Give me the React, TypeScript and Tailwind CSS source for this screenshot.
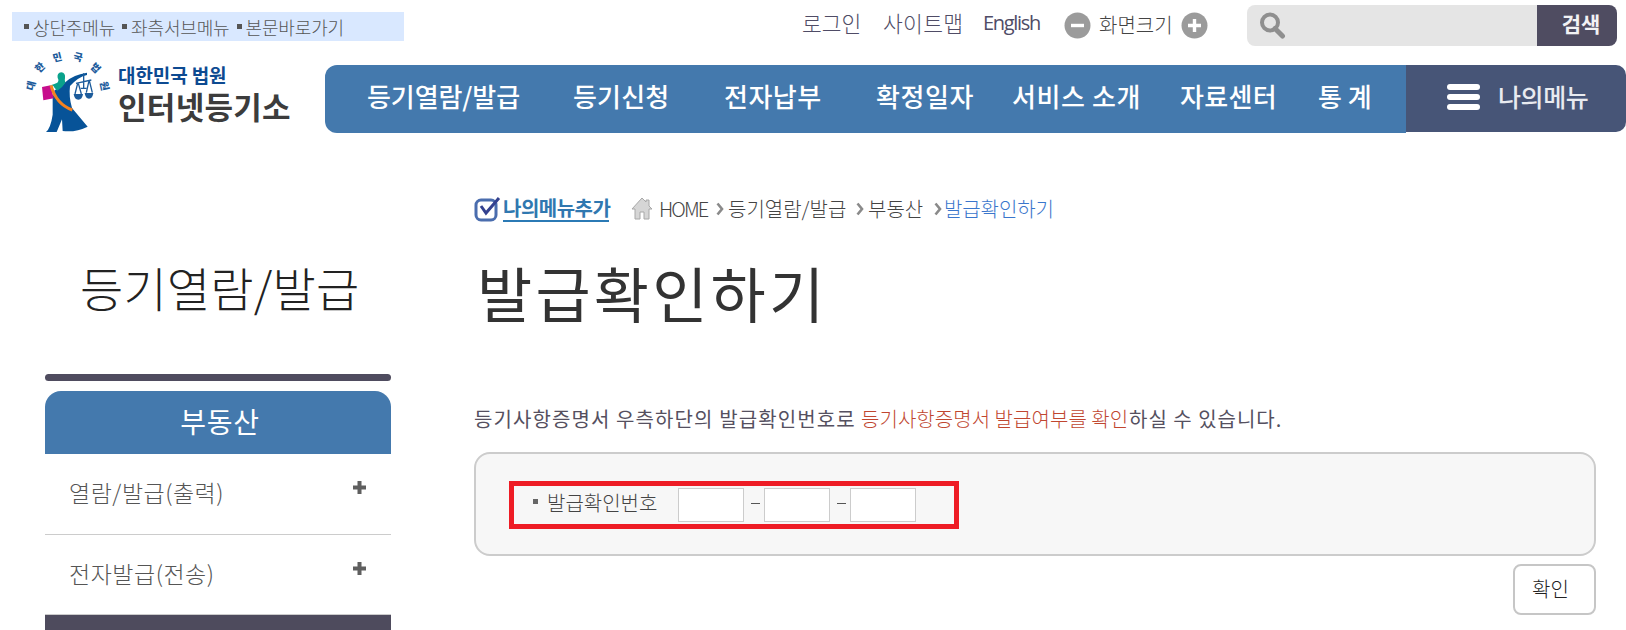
import React from "react";

const navItems = [
  { label: "등기열람/발급", className: "w-[206px] tracking-[-0.1px]" },
  { label: "등기신청", className: "w-[151px] tracking-[0.2px]" },
  { label: "전자납부", className: "w-[152px] tracking-[0.5px]" },
  { label: "확정일자", className: "w-[136px] tracking-[0.6px]" },
  { label: "서비스 소개", className: "w-[168px] tracking-[0.6px]" },
  { label: "자료센터", className: "w-[138px] tracking-[0.3px]" },
  { label: "통 계", className: "w-[64px]" },
];

const sideItems = ["열람/발급(출력)", "전자발급(전송)"];

const Emblem = () => (
  <svg width="90" height="82" viewBox="6 6 270 246" className="shrink-0 overflow-visible">
    <g
      fill="#1d5c9c"
      fontFamily="'Noto Sans CJK KR', sans-serif"
      fontWeight="900"
      fontSize="30"
      textAnchor="middle"
    >
      <text transform="translate(33 113) rotate(-75)" y="11">대</text>
      <text transform="translate(60 58) rotate(-45)" y="11">한</text>
      <text transform="translate(112 28) rotate(-14)" y="11">민</text>
      <text transform="translate(174 27) rotate(14)" y="11">국</text>
      <text transform="translate(227 60) rotate(45)" y="11">법</text>
      <text transform="translate(254 114) rotate(78)" y="11">원</text>
    </g>
    <path
      d="M201 74 L201 81 Q176 86 150 114 Q146 146 156 180 L203 236 Q166 254 128 249 L126 214 L110 252 L78 252 Q92 240 98 200 L98 150 L104 126 Q122 120 134 104 Q158 80 201 74 Z"
      fill="#075398"
    />
    <path d="M92 112 Q104 108 112 104 Q118 98 113 90 Q110 75 124 73 Q137 75 135 90 Q133 98 136 104 Q128 118 112 128 Q104 122 100 114 Z" fill="#0aa28c" />
    <path d="M66 117 L92 112 L101 151 L70 157 Z" fill="#c70d8c" />
    <path d="M93 112 Q108 168 157 186" fill="none" stroke="#f58220" strokeWidth="9" />
    <g fill="none" stroke="#1d5c9c" strokeWidth="4">
      <path d="M191 76 V119 M168 106 L214 96 M182 121 H200" />
      <path d="M173 106 L165 138 M175 106 L184 138 M207 98 L199 134 M208 98 L217 134" />
    </g>
    <path d="M161 138 H189 Q187 155 175 155 Q163 155 161 138 Z M194 135 H220 Q218 152 207 152 Q196 152 194 135 Z" fill="#1d5c9c" />
  </svg>
);

const Chevron = () => (
  <svg width="8" height="14" viewBox="0 0 8 14" className="shrink-0">
    <path d="M1.5 1.5 L6 7 L1.5 12.5" fill="none" stroke="#8a8a8a" strokeWidth="2.6" />
  </svg>
);

const Plus = () => (
  <svg width="13" height="13" viewBox="0 0 13 13">
    <path d="M6.5 0 V13 M0 6.5 H13" stroke="#5f5f5f" strokeWidth="4" />
  </svg>
);

const SizeButton = ({ plus }: { plus?: boolean }) => (
  <svg width="27" height="27" viewBox="0 0 27 27" className="shrink-0">
    <circle cx="13.5" cy="13.5" r="13" fill="#9b9b9b" />
    <path d={plus ? "M7 13.5 H20 M13.5 7 V20" : "M7 13.5 H20"} stroke="#fff" strokeWidth="3.4" />
  </svg>
);

export default function App() {
  return (
    <div className="w-[1626px] h-[630px] overflow-hidden bg-white font-['Noto_Sans_CJK_KR',sans-serif] leading-none text-[#555] whitespace-nowrap">
      {/* Top utilities */}
      <div className="flex h-[65px] items-start">
        <ul className="ml-3 mt-3 flex h-[29px] w-[392px] items-center pl-[12px] text-[18px] font-light tracking-[-0.15px] text-[#555] bg-[#d9e8ff]">
          {["상단주메뉴", "좌측서브메뉴", "본문바로가기"].map((item) => (
            <li key={item} className="mr-[7px] flex items-center pt-px">
              <span className="mr-1 mb-px size-[5px] bg-[#555]" />
              {item}
            </li>
          ))}
        </ul>
        <div className="ml-[398px] mt-[9px] flex h-8 items-center text-[#4f4c66]">
          <a className="w-[81px] -mt-1 text-[21.5px] font-light">로그인</a>
          <a className="w-[100px] -mt-1 text-[21.5px] font-light tracking-[0.3px]">사이트맵</a>
          <a className="w-[81px] -mt-1 font-['Open_Sans',sans-serif] text-[20px] tracking-[-1.3px]">English</a>
          <SizeButton />
          <span className="ml-2 w-[82px] text-[20px] font-light text-[#444]">화면크기</span>
          <SizeButton plus />
        </div>
        <div className="ml-[39px] mt-[5px] flex h-[41px]">
          <div className="flex w-[290px] items-center rounded-l-lg bg-[#e5e5e5] pl-3">
            <svg width="27" height="27" viewBox="0 0 27 27">
              <circle cx="11" cy="10.5" r="8" fill="none" stroke="#8f8f8f" strokeWidth="4" />
              <path d="M16 16.5 L23.5 24" stroke="#8f8f8f" strokeWidth="5" strokeLinecap="round" />
            </svg>
          </div>
          <button className="w-20 rounded-r-lg bg-[#4f4c61] pb-1 pl-2 text-[21px] font-bold text-[#f2f2f4]">검색</button>
        </div>
      </div>

      {/* Logo and main menu */}
      <header className="flex h-[68px]">
        <div className="flex w-[325px] pl-[22px]">
          <div className="-mt-[15px]">
            <Emblem />
          </div>
          <div className="ml-[6px]">
            <p className="text-[19px] font-bold tracking-[-0.1px] text-[#0d4a91]">대한민국 법원</p>
            <p className="mt-[6px] text-[31px] font-bold tracking-[0.3px] text-[#3c3c3c]">인터넷등기소</p>
          </div>
        </div>
        <nav className="flex w-[1081px] items-center rounded-l-xl bg-[#4479ad] pl-[42px] pb-[6px] text-[26px] font-medium text-white">
          {navItems.map((item) => (
            <a key={item.label} className={item.className}>
              {item.label}
            </a>
          ))}
        </nav>
        <div className="flex h-[67px] w-[220px] items-center rounded-r-[10px] bg-[#475577] pl-[41px] pb-1">
          <div className="flex w-[33px] flex-col gap-1">
            <span className="h-[6px] rounded-sm bg-white" />
            <span className="h-[6px] rounded-sm bg-white" />
            <span className="h-[6px] rounded-sm bg-white" />
          </div>
          <span className="ml-[18px] text-[25px] font-medium tracking-[-0.4px] text-[#e9ebf0]">나의메뉴</span>
        </div>
      </header>

      <div className="flex">
        {/* Left menu */}
        <aside className="ml-[45px] w-[346px] pt-[130px]">
          <h2 className="h-[111px] pl-[35px] text-[47px] font-light tracking-[0.2px] text-[#222]">등기열람/발급</h2>
          <div className="h-[7px] rounded-sm bg-[#4f4c5f]" />
          <div className="mt-[10px] flex h-[63px] items-center justify-center rounded-t-2xl bg-[#4479ad] pb-1 pl-1 text-[28px] tracking-[0.8px] text-white">
            부동산
          </div>
          <ul>
            {sideItems.map((item) => (
              <li key={item} className="flex h-[80.5px] justify-between border-b border-[#ccc] pl-6 pr-[25px] pt-[27px] text-[23px] font-light tracking-[0.5px] text-[#555]">
                {item}
                <Plus />
              </li>
            ))}
          </ul>
          <div className="h-5 bg-[#4e4b5d]" />
        </aside>

        {/* Content */}
        <main className="ml-[83px] w-[1122px] pt-[62px]">
          <div className="flex h-7 items-center text-[20px] font-light text-[#444]">
            <svg width="27" height="27" viewBox="0 0 27 27">
              <rect x="2" y="4" width="20" height="20" rx="5" fill="#fff" stroke="#4a6dae" strokeWidth="3" />
              <path d="M7 10 L12 17 L25 2" fill="none" stroke="#33418f" strokeWidth="3" />
            </svg>
            <a className="ml-[2px] h-[25px] w-[106px] border-b-2 border-[#2b7ab5] pt-[1px] text-[20px] font-bold tracking-[-0.5px] text-[#3078b0]">
              나의메뉴추가
            </a>
            <svg width="24" height="24" viewBox="0 0 24 24" className="ml-[22px]">
              <path d="M11 1 L1 12 H4 V22 H9 V15 H13 V22 H18 V12 H21 L18 9 V3 H15 V5 Z" fill="#d6d6d6" stroke="#a8a8a8" strokeWidth="1" />
            </svg>
            <span className="ml-[4px] w-[57px] text-[20px] tracking-[-1.9px]">HOME</span>
            <Chevron />
            <span className="ml-[4px] w-[128px]">등기열람/발급</span>
            <Chevron />
            <span className="ml-[4px] w-[66px]">부동산</span>
            <Chevron />
            <span className="ml-[2px] tracking-[-0.1px] text-[#3a76cc]">발급확인하기</span>
          </div>
          <h1 className="mt-[39px] h-[118px] pl-[3px] text-[60px] tracking-[3.2px] text-[#333]">발급확인하기</h1>
          <p className="flex h-[72px] pt-[29px] text-[20px] tracking-[1.1px] text-[#55505f]">
            <span className="w-[387px]">등기사항증명서 우측하단의 발급확인번호로</span>
            <span className="w-[268px] font-light tracking-[0.05px] text-[#c0462f]">등기사항증명서 발급여부를 확인</span>
            <span className="tracking-[1px]">하실 수 있습니다.</span>
          </p>
          <section className="h-[104px] rounded-2xl border-2 border-[#ccc] bg-[#f7f7f7] pl-[33px] pt-[27px]">
            <div className="flex h-12 w-[450px] items-center border-[5px] border-[#ee1c25] pl-[19px]">
              <span className="mb-2 size-[5px] bg-[#666]" />
              <label className="ml-[9px] w-[131px] pb-1 text-[20px] font-light text-[#444]">발급확인번호</label>
              <input className="h-[34px] w-[66px] border border-[#ccc] bg-white" />
              <span className="mb-1 ml-[7px] mr-1 h-px w-[9px] bg-[#555]" />
              <input className="h-[34px] w-[66px] border border-[#ccc] bg-white" />
              <span className="mb-1 ml-[7px] mr-1 h-px w-[9px] bg-[#555]" />
              <input className="h-[34px] w-[66px] border border-[#ccc] bg-white" />
            </div>
          </section>
          <div className="mt-2 flex justify-end">
            <button className="h-[51px] w-[83px] rounded-lg border-2 border-[#c6c6c6] bg-white pb-0.5 pr-2 text-[20px] font-light text-[#222]">
              확인
            </button>
          </div>
        </main>
      </div>
    </div>
  );
}
